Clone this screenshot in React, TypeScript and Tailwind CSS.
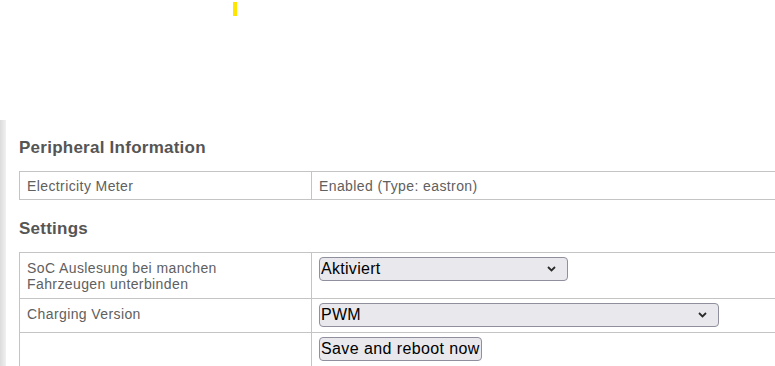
import { ReactNode } from 'react';

const Chevron = () => (
  <svg width="9" height="6" viewBox="0 0 9 6" className="shrink-0">
    <path d="M1 1l3.5 3.5L8 1" fill="none" stroke="#2b2b2b" strokeWidth="1.8" />
  </svg>
);

const Select = ({ value, width }: { value: string; width: string }) => (
  <div
    className={`${width} h-[24px] flex items-center justify-between pl-[1px] pr-[11px] bg-[#e9e9ed] border border-[#8f8f9d] rounded-[4px] text-[16px] tracking-[0.3px] text-black leading-none`}
  >
    <span>{value}</span>
    <Chevron />
  </div>
);

const Row = ({ label, children }: { label: ReactNode; children: ReactNode }) => (
  <tr>
    <td className="w-[292px] border border-[#c4c4c4] align-top px-[7px] pt-[7px] pb-[6px] leading-[16px]">{label}</td>
    <td className="border border-[#c4c4c4] align-top px-[7px] pt-[4px] pb-[5px] leading-[16px]">{children}</td>
  </tr>
);

export default function App() {
  return (
    <div className="w-[775px] h-[366px] overflow-hidden bg-white font-['Liberation_Sans',Arial,sans-serif]">
      <div className="h-[120px] pt-[2px] pl-[233px]">
        <div className="w-[4px] h-[14px] bg-[#ffe600]" />
      </div>
      <div className="flex">
        <div className="w-[6px] h-[246px] shrink-0 bg-gradient-to-r from-[#dcdcdc] to-[#f0f0f0]" />
        <div className="pl-[13px] pt-[18px] text-[14px] tracking-[0.4px] text-[#606060]">
          <h2 className="text-[17px] font-bold leading-[20px] tracking-[0.25px] text-[#555]">Peripheral Information</h2>
          <table className="mt-[13px] w-[800px] border-collapse">
            <tbody>
              <tr>
                <td className="w-[292px] border border-[#c4c4c4] px-[7px] pt-[6px] pb-[5px] leading-[16px]">Electricity Meter</td>
                <td className="border border-[#c4c4c4] px-[7px] pt-[6px] pb-[5px] leading-[16px]">Enabled (Type: eastron)</td>
              </tr>
            </tbody>
          </table>
          <h2 className="mt-[19px] text-[17px] font-bold leading-[20px] tracking-[0.25px] text-[#555]">Settings</h2>
          <table className="mt-[13px] w-[800px] border-collapse">
            <tbody>
              <Row
                label={
                  <>
                    SoC Auslesung bei manchen
                    <br />
                    Fahrzeugen unterbinden
                  </>
                }
              >
                <Select value="Aktiviert" width="w-[249px]" />
              </Row>
              <Row label="Charging Version">
                <Select value="PWM" width="w-[400px]" />
              </Row>
              <Row label="">
                <button className="h-[24px] px-[1px] bg-[#e9e9ed] border border-[#8f8f9d] rounded-[4px] text-[16px] tracking-[0.4px] text-black leading-none">
                  Save and reboot now
                </button>
              </Row>
            </tbody>
          </table>
        </div>
      </div>
    </div>
  );
}
